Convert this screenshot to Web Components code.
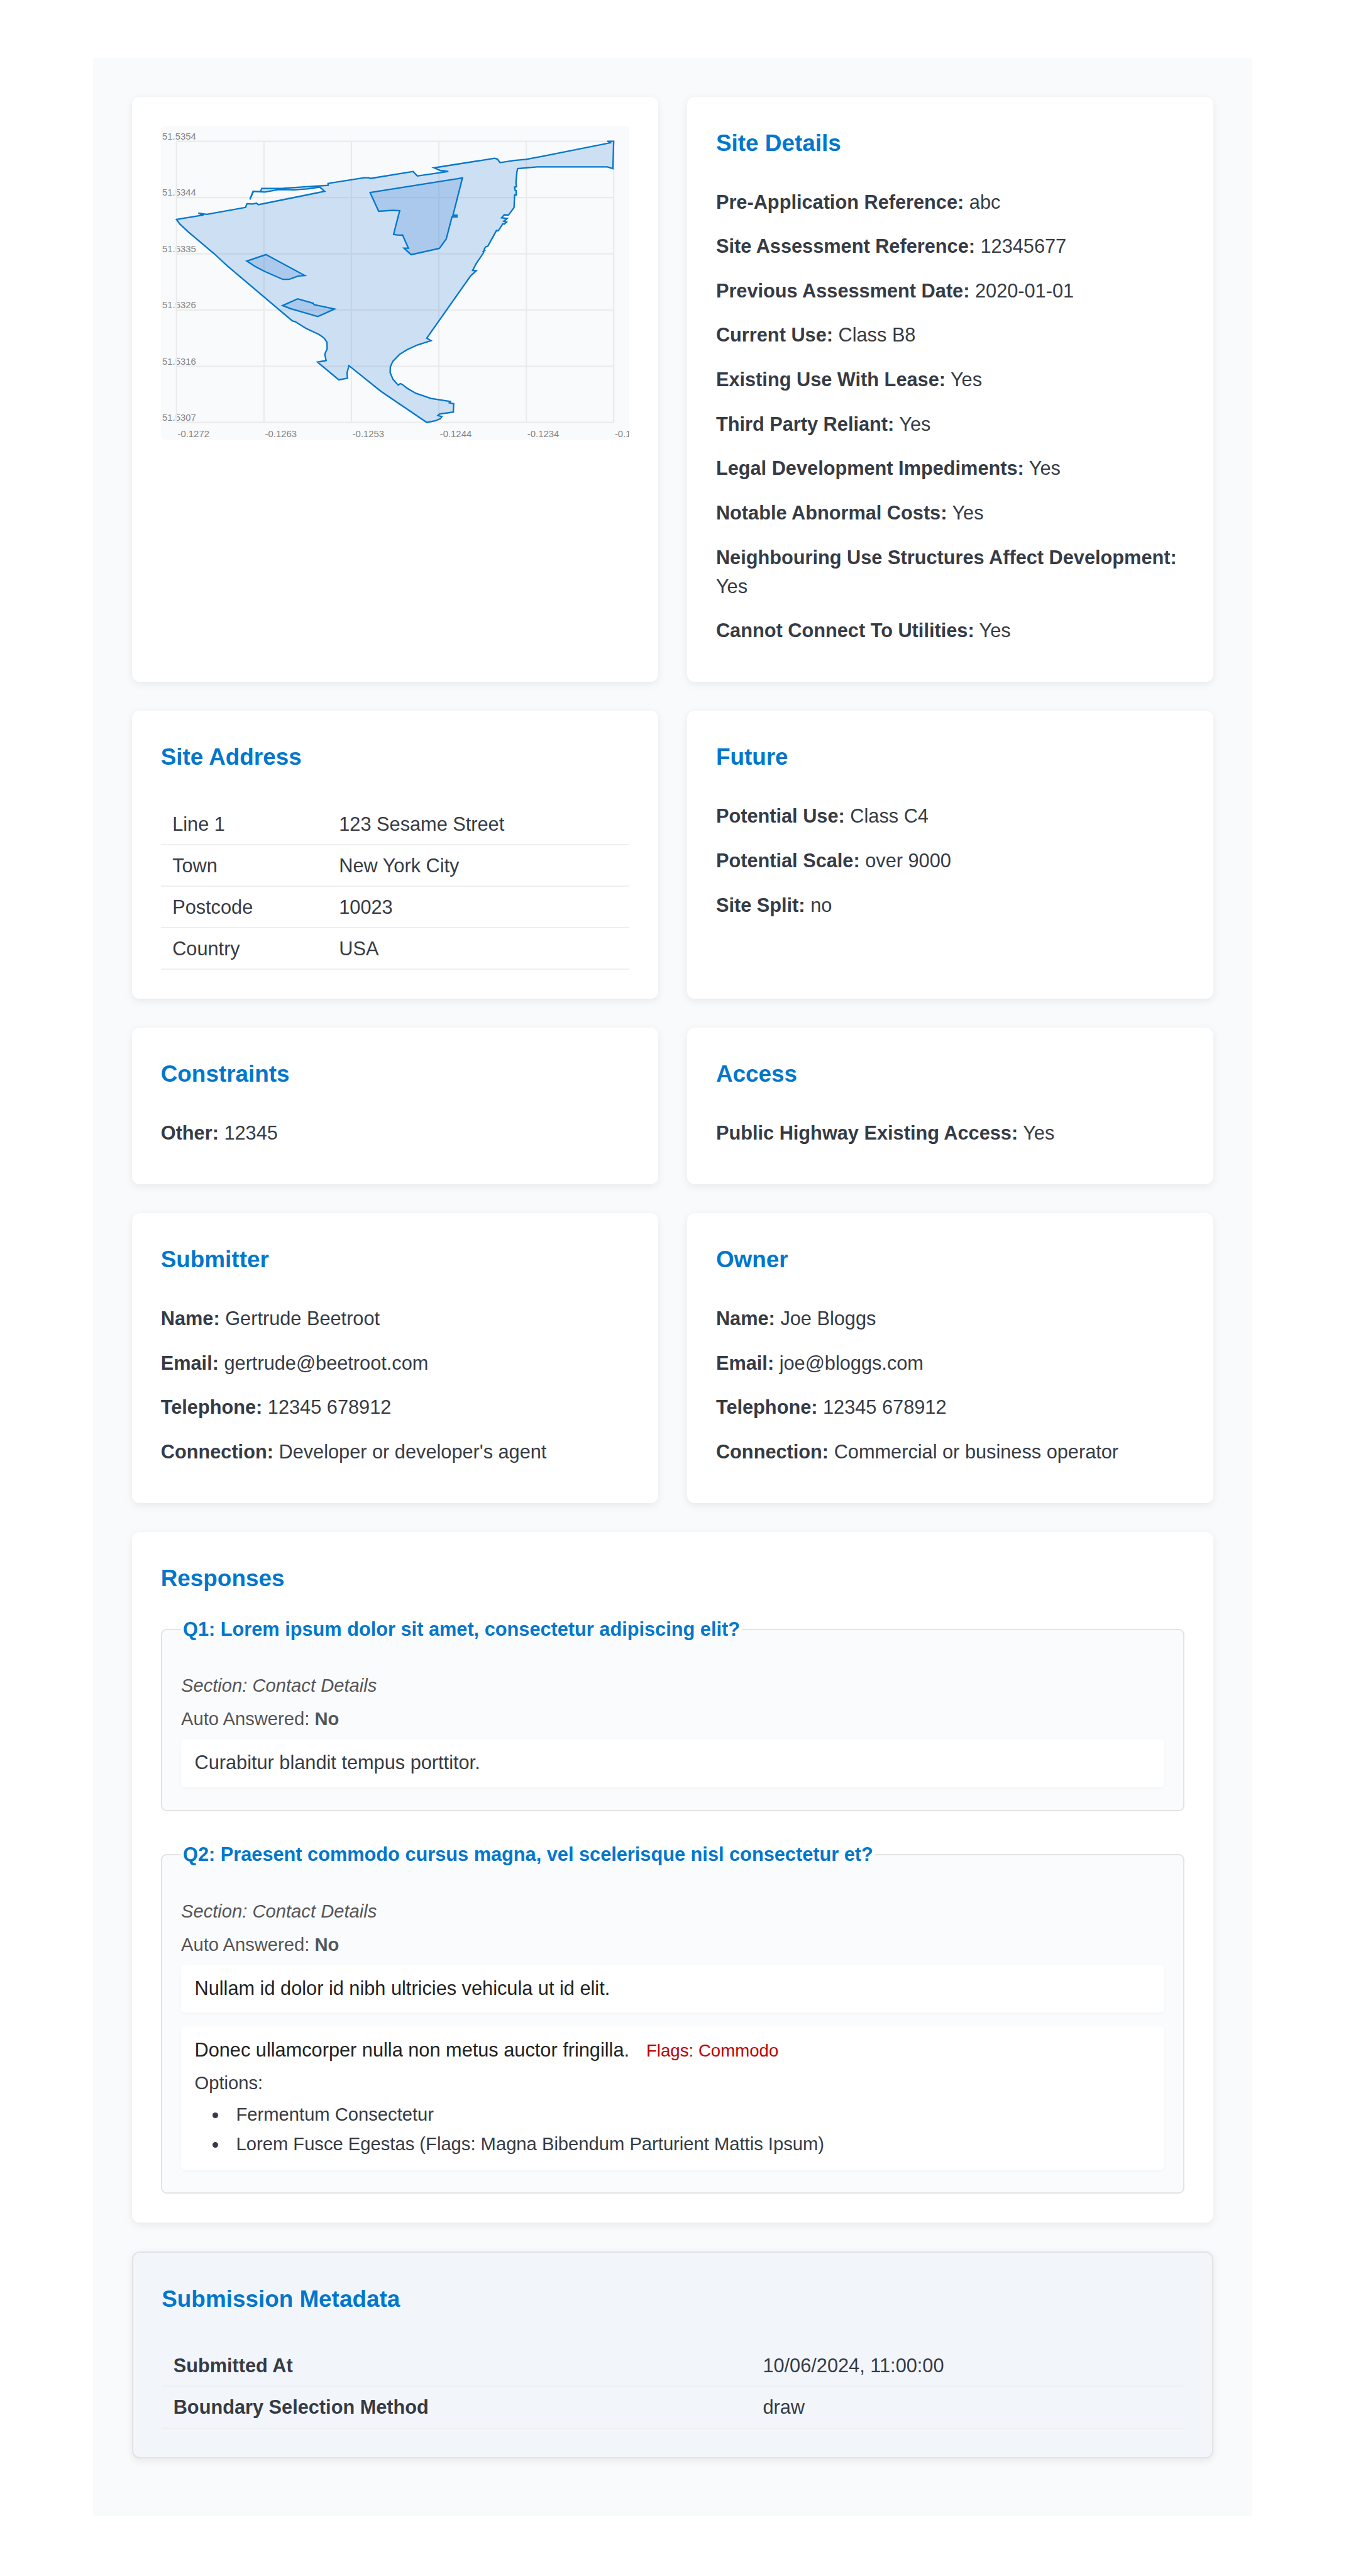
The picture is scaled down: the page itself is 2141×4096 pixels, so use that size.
<!DOCTYPE html>
<html lang="en">
<head>
<meta charset="utf-8">
<title>Site submission</title>
<style>
  /* 1rem = ten layout units */
  html { font-size: 15.36px; background: #fff; }
  body { margin: 0; color: #363b45; font: 2rem/1.5 "Liberation Sans", Arial, sans-serif; }
</style>
</head>
<body>
<submission-page>
  <info-card><boundary-map></boundary-map></info-card>
  <info-card heading="Site Details">
    <info-field label="Pre-Application Reference">abc</info-field>
    <info-field label="Site Assessment Reference">12345677</info-field>
    <info-field label="Previous Assessment Date">2020-01-01</info-field>
    <info-field label="Current Use">Class B8</info-field>
    <info-field label="Existing Use With Lease">Yes</info-field>
    <info-field label="Third Party Reliant">Yes</info-field>
    <info-field label="Legal Development Impediments">Yes</info-field>
    <info-field label="Notable Abnormal Costs">Yes</info-field>
    <info-field label="Neighbouring Use Structures Affect Development">Yes</info-field>
    <info-field label="Cannot Connect To Utilities">Yes</info-field>
  </info-card>
  <info-card heading="Site Address">
    <data-table>
      <data-row label="Line 1">123 Sesame Street</data-row>
      <data-row label="Town">New York City</data-row>
      <data-row label="Postcode">10023</data-row>
      <data-row label="Country">USA</data-row>
    </data-table>
  </info-card>
  <info-card heading="Future">
    <info-field label="Potential Use">Class C4</info-field>
    <info-field label="Potential Scale">over 9000</info-field>
    <info-field label="Site Split">no</info-field>
  </info-card>
  <info-card heading="Constraints">
    <info-field label="Other">12345</info-field>
  </info-card>
  <info-card heading="Access">
    <info-field label="Public Highway Existing Access">Yes</info-field>
  </info-card>
  <info-card heading="Submitter">
    <info-field label="Name">Gertrude Beetroot</info-field>
    <info-field label="Email">gertrude@beetroot.com</info-field>
    <info-field label="Telephone">12345 678912</info-field>
    <info-field label="Connection">Developer or developer's agent</info-field>
  </info-card>
  <info-card heading="Owner">
    <info-field label="Name">Joe Bloggs</info-field>
    <info-field label="Email">joe@bloggs.com</info-field>
    <info-field label="Telephone">12345 678912</info-field>
    <info-field label="Connection">Commercial or business operator</info-field>
  </info-card>
  <info-card heading="Responses" wide>
    <response-list>
      <response-item question="Q1: Lorem ipsum dolor sit amet, consectetur adipiscing elit?" section="Contact Details" auto="No">
        <answer-box>Curabitur blandit tempus porttitor.</answer-box>
      </response-item>
      <response-item question="Q2: Praesent commodo cursus magna, vel scelerisque nisl consectetur et?" section="Contact Details" auto="No">
        <answer-box strong>Nullam id dolor id nibh ultricies vehicula ut id elit.</answer-box>
        <answer-box strong flags="Flags: Commodo" options="Fermentum Consectetur|Lorem Fusce Egestas (Flags: Magna Bibendum Parturient Mattis Ipsum)">Donec ullamcorper nulla non metus auctor fringilla.</answer-box>
      </response-item>
    </response-list>
  </info-card>
  <info-card heading="Submission Metadata" wide meta>
    <data-table meta>
      <data-row label="Submitted At">10/06/2024, 11:00:00</data-row>
      <data-row label="Boundary Selection Method">draw</data-row>
    </data-table>
  </info-card>
</submission-page>

<script>
const define = (name, render) => customElements.define(name, class extends HTMLElement {
  constructor() {
    super();
    this.attachShadow({ mode: 'open' }).innerHTML = render(this);
  }
});

define('submission-page', () => `
  <style>
    :host { display: grid; box-sizing: border-box; width: 120rem; height: 254.5rem; margin: 6rem 0 0 9.65rem;
      padding: 4rem 4rem 0; grid-template-columns: 1fr 1fr; gap: 3rem; align-content: start; background: #f8fafc; }
  </style><slot></slot>`);

define('info-card', el => `
  <style>
    :host { display: block; box-sizing: border-box; min-width: 0; padding: 3rem; border-radius: .8rem;
      background: #fff; box-shadow: 0 .2rem .8rem rgba(0,0,0,.07); }
    :host([wide]) { grid-column: 1 / -1; }
    :host([meta]) { background: #f2f6fb; border: 2px solid #e2e3e5; padding: calc(3.1rem - 2px); }
    h2 { margin: 0 0 2rem; font-size: 2.4rem; line-height: 1.5; font-weight: 700; color: #0077cc; }
  </style>${el.hasAttribute('heading') ? `<h2>${el.getAttribute('heading')}</h2>` : ''}<slot></slot>`);

define('info-field', el => `
  <style>
    :host { display: block; padding: .84rem 0 .76rem; }
  </style><strong>${el.getAttribute('label')}:</strong> <slot></slot>`);

define('data-table', () => `
  <style>
    :host { display: block; padding-top: 1rem; --first: 17.26rem; --weight: 400; }
    :host([meta]) { --first: 61.05rem; --weight: 700; }
  </style><slot></slot>`);

define('data-row', el => `
  <style>
    :host { display: grid; grid-template-columns: var(--first) 1fr; box-sizing: border-box; height: 4.3rem;
      border-bottom: 2px solid #efeff0; }
    span { padding: .64rem 1.2rem 0; }
    .label { font-weight: var(--weight); }
  </style><span class="label">${el.getAttribute('label')}</span><span><slot></slot></span>`);

define('response-list', () => `
  <style>:host { display: flex; flex-direction: column; gap: 3rem; }</style><slot></slot>`);

define('response-item', el => `
  <style>
    :host { display: block; }
    fieldset { min-width: 0; margin: 0; padding: 2rem calc(2.1rem - 2px) calc(2.5rem - 2px); border: 2px solid #e2e3e5; border-radius: .6rem; background: #fafbfd; }
    legend { padding: 0 .2rem; font-weight: 700; color: #0077cc; }
    .meta { font-size: 1.9rem; color: #555; margin-bottom: .6rem; }
    .section { margin-top: .94rem; font-style: italic; }
    .answers { display: flex; flex-direction: column; gap: 1.4rem; }
  </style>
  <fieldset>
    <legend>${el.getAttribute('question')}</legend>
    <div class="meta section">Section: ${el.getAttribute('section')}</div>
    <div class="meta">Auto Answered: <strong>${el.getAttribute('auto')}</strong></div>
    <div class="answers"><slot></slot></div>
  </fieldset>`);

define('answer-box', el => {
  const flags = el.getAttribute('flags');
  const options = el.getAttribute('options');
  return `
  <style>
    :host { display: block; padding: 1rem 1.4rem; border-radius: .4rem; background: #fff; box-shadow: 0 .1rem .3rem rgba(0,0,0,.03); }
    :host([strong]) .text { color: #222; }
    .flags { margin-left: 1.2rem; font-size: 1.8rem; color: #c00000; }
    .options { margin-top: .5rem; font-size: 1.9rem; }
    .line { height: 3rem; }
    ul { margin: .4rem 0 0; padding: 0 0 0 3.4rem; }
    li { margin-bottom: .2rem; padding-left: .9rem; }
  </style>
  <div class="line"><span class="text"><slot></slot></span>${flags ? ` <span class="flags">${flags}</span>` : ''}</div>
  ${options ? `<div class="options">Options:<ul>${options.split('|').map(o => `<li>${o}</li>`).join('')}</ul></div>` : ''}`;
});

define('boundary-map', () => {
  const xs = [0, 1, 2, 3, 4, 5].map(i => 365.3 + 181.1 * i);
  const ys = [0, 1, 2, 3, 4, 5].map(i => 292.2 + 116.4 * i);
  const grid = xs.map(x => `M${x} ${ys[0]}V${ys[5]}`).join('') + ys.map(y => `M${xs[0]} ${y}H${xs[5]}`).join('');
  const lat = ['51.5354', '51.5344', '51.5335', '51.5326', '51.5316', '51.5307'];
  const lon = ['-0.1272', '-0.1263', '-0.1253', '-0.1244', '-0.1234', '-0.1'];
  return `
  <style>
    :host { display: block; }
    svg { display: block; width: 48.5rem; height: 32.5rem; border-radius: .4rem; background: #f8fafc; }
    text { font-size: 19.4px; fill: #838383; }
    .grid { fill: none; stroke: #ebebeb; stroke-width: 3; }
    .area { fill: rgba(33,115,212,.2); stroke: #0077cc; stroke-width: 3; }
  </style>
  <svg viewBox="333 260 970 650">
    ${lat.map((t, i) => `<text x="335.6" y="${ys[i] - 3.4}">${t}</text>`).join('')}
    ${lon.map((t, i) => `<text x="${xs[i] + 2.2}" y="904">${t}</text>`).join('')}
    <path class="grid" d="${grid}"/>
    <path class="area" d="M365.3 454 421 444.7 410.4 441 427.8 443.3 508.1 429 511.3 421.3 522.9 422 530.9 420.3 534.9 423.3 672 395.7 662.1 387 635.4 390.7 608.6 392.7 577.3 392 548.3 397.3 524.6 396 517.1 412.7 523.8 396 538.9 396.3 542 389.7 586.3 389.3 679.1 383.3 679.1 379.3 753.7 367.7 763.5 367.7 767.1 369 855.3 354.6 864 364 928.3 354.5 912.5 352.8 898.6 347 1024.4 327.3 1029.9 329.1 1035.4 336.2 1064.7 331.8 1089.6 329.5 1124 322.9 1263.6 295.2 1257.6 292 1270.7 292 1269.1 348.7 1257.6 345.2 1112.1 345.2 1071.8 348.7 1070.2 355.9 1068.2 378.2 1069.4 386.2 1065.5 387 1066.3 393 1068.6 394 1069 403.2 1065.5 403.2 1064.3 429.5 1052.8 444.7 1044.1 444.3 1038.6 450.5 1050 451.9 1043 457.7 1048.9 459.5 1044.1 463.5 1041 463 1031.9 477.3 1027.9 476.9 1010.1 509 1005.4 510.8 1002.6 515.7 1003.8 517.9 1000.2 520.2 1001.4 522.4 985.6 546 978.5 559.4 986 560.3 974.5 570.6 883.6 699.6 892.3 705 865 713.5 843.3 723.3 827.4 733.1 813.2 747.8 808.1 759 807.7 771 813.6 784.9 824.3 796.9 828.6 793.8 832.2 795.1 843.3 803.6 861.1 813.9 892.7 824.6 932.2 830.9 930.3 833.5 939.3 835.3 938.6 852.7 909.7 856.7 906.5 859.9 914.8 862.1 911.7 866.6 900.6 871 883.6 874.2 788.6 809.8 722.4 756.7 718.4 771.7 719.3 782.7 701.4 786 657.2 749.3 675.1 746 672.4 732.7 677.3 721.7 676.9 708.3 671.1 700 660.8 692.3 633.1 679.3 610.8 665.3 605.4 664.3 470.2 550 443.4 525 389.8 480 372 463.3Z"/>
    <path class="area" d="M766.2 398.3 957.5 367.9 937.8 445.2 946 445.2 946 448.7 935.8 448.7 923.9 494.3 909.7 513.9 851.2 526.9 836.5 513.5 845.6 513.5 833.4 486.2 828 486.5 822.7 486 814.8 484.9 827.4 435.8 813.6 434.9 784 437.1Z"/>
    <path class="area" d="M510.8 540 550.5 526.7 630.9 570 617.5 571 598.3 578 585.4 578 548.3 561.7 528.2 551.3Z"/>
    <path class="area" d="M584.9 632.3 616.2 618.3 647.9 627.3 650.1 630.3 692.5 639.3 657.7 655 601.9 638.7Z"/>
  </svg>`;
});
</script>
</body>
</html>
